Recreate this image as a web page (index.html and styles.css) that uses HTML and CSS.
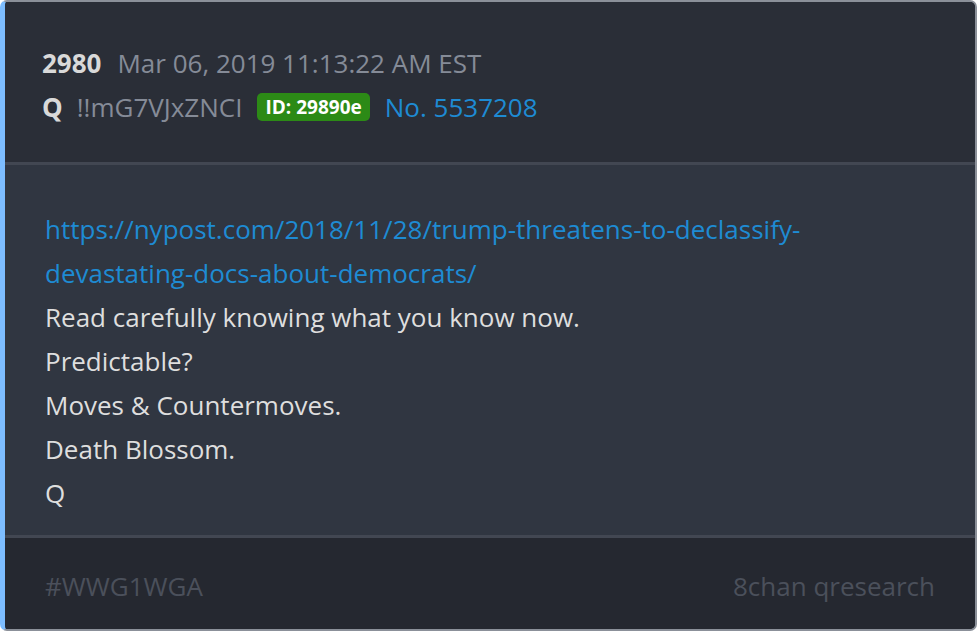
FILE: index.html
```html
<!DOCTYPE html>
<html>
<head>
<meta charset="utf-8">
<link rel="stylesheet" href="styles.css">
</head>
<body>
<div class="card">
  <div class="head">
    <div class="line"><span class="num">2980</span><span class="date">Mar 06, 2019 11:13:22 AM EST</span></div>
    <div class="line"><span class="q">Q</span><span class="trip">!!mG7VJxZNCI</span><span class="badge">ID: 29890e</span><span class="no">No. 5537208</span></div>
  </div>
  <div class="body">
    <div class="link">https://nypost.com/2018/11/28/trump-threatens-to-declassify-<br>devastating-docs-about-democrats/</div>
    <div>Read carefully knowing what you know now.</div>
    <div>Predictable?</div>
    <div>Moves &amp; Countermoves.</div>
    <div>Death Blossom.</div>
    <div>Q</div>
  </div>
  <div class="foot">
    <span>#WWG1WGA</span>
    <span>8chan qresearch</span>
  </div>
</div>
</body>
</html>
```
FILE: styles.css
```css
html, body {
  margin: 0;
  padding: 0;
  background: #ffffff;
}
body {
  font-family: "Open Sans", "Noto Sans", sans-serif;
  width: 978px;
  height: 632px;
}
.card {
  box-sizing: border-box;
  width: 977px;
  height: 631px;
  border: 2px solid #8b9099;
  border-left: 5px solid #7dbdff;
  border-radius: 7px;
  overflow: hidden;
  display: flex;
  flex-direction: column;
  background: #252830;
}
.head {
  background: #2a2e37;
  padding: 39px 40px 0 37px;
  height: 163px;
  box-sizing: border-box;
  border-bottom: 3px solid #424752;
}
.line {
  display: flex;
  align-items: center;
  height: 44px;
  font-size: 26px;
}
.num {
  font-weight: 700;
  color: #d9d9d9;
  margin-right: 16px;
}
.date {
  color: #858b97;
}
.q {
  font-weight: 700;
  color: #d9d9d9;
  margin-right: 14px;
}
.trip {
  color: #858b97;
  margin-right: 15px;
}
.badge {
  background: #2c8a16;
  color: #ffffff;
  font-weight: 700;
  font-size: 19px;
  border-radius: 5px;
  padding: 0 8px;
  height: 28px;
  line-height: 28px;
  margin-right: 15px;
}
.no {
  color: #1e8bd3;
}
.body {
  background: #303641;
  padding: 42px 40px 19px 40px;
  font-size: 26px;
  line-height: 44px;
  color: #dedede;
  border-bottom: 3px solid #424752;
  height: 373px;
  box-sizing: border-box;
}
.link {
  color: #1e8bd3;
}
.foot {
  flex: 1;
  background: #252830;
  display: flex;
  justify-content: space-between;
  align-items: center;
  padding: 4px 40px 0 40px;
  font-size: 26px;
  color: #4b505b;
}
```
